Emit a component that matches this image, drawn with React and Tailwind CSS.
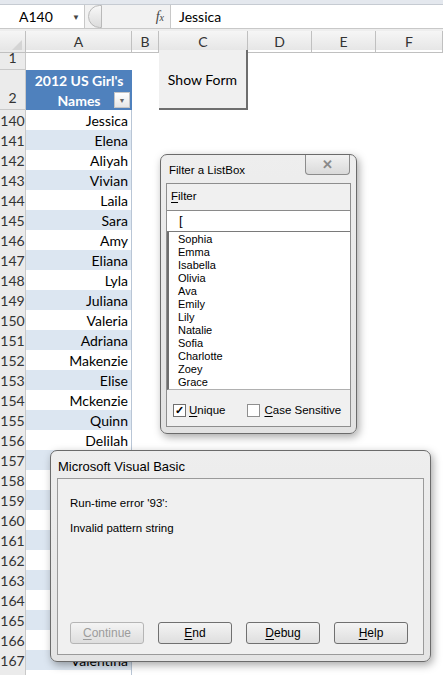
import React from "react";

const names = [
  "Jessica", "Elena", "Aliyah", "Vivian", "Laila", "Sara", "Amy", "Eliana", "Lyla", "Juliana",
  "Valeria", "Adriana", "Makenzie", "Elise", "Mckenzie", "Quinn", "Delilah", "Cora", "Kylie",
  "Rachel", "Daniela", "Kimberly", "Alexis", "Melody", "Kayla", "Jordyn", "Reagan", "Valentina", "",
];

const listItems = [
  "Sophia", "Emma", "Isabella", "Olivia", "Ava", "Emily", "Lily", "Natalie", "Sofia", "Charlotte", "Zoey", "Grace",
];

const cols = "grid grid-cols-[26px_106px_27px_89px_64px_64px_67px]";

function Mn({ k, rest }) {
  return (
    <span>
      <span className="underline underline-offset-2">{k}</span>
      {rest}
    </span>
  );
}

function VbButton({ children, disabled }) {
  return (
    <div
      className={
        "flex h-[22px] w-[74px] items-center justify-center rounded-[3px] border bg-gradient-to-b from-[#f4f4f4] to-[#dedede] text-[12px] " +
        (disabled ? "border-[#b5b5b5] text-[#9c9c9c]" : "border-[#707070] text-black")
      }
    >
      {children}
    </div>
  );
}

function Sheet() {
  return (
    <div className="font-['Lato',sans-serif] text-[14px] text-black">
      {/* ribbon edge + formula bar */}
      <div className="h-[5px] border-b border-[#c6cbd2] bg-[#e4e8ee]" />
      <div className="flex h-[23px] bg-[#f2f2f2]">
        <div className="flex w-[85px] items-center justify-between border-r border-[#c8c8c8] bg-white pl-[19px] pr-[4px]">
          <span>A140</span>
          <span className="text-[8px] text-[#444]">▼</span>
        </div>
        <div className="ml-[3px] h-[23px] w-[14px] rounded-l-full border border-[#b9b9b9] bg-gradient-to-b from-[#f8f8f8] to-[#dcdcdc]" />
        <div className="flex w-[68px] items-center justify-end pr-[6px] font-['Liberation_Serif',serif] text-[14px] italic text-[#444]">
          <span>f<span className="text-[10px]">x</span></span>
        </div>
        <div className="flex flex-1 items-center border-l border-[#c8c8c8] bg-white pl-[8px]">Jessica</div>
      </div>
      <div className="h-[3px] border-t border-[#c8c8c8] bg-[#eeeeee]" />

      {/* column headers */}
      <div className={cols + " h-[19px] bg-gradient-to-b from-[#f6f6f6] to-[#e6e6e6] text-[#333]"}>
        <div className="relative border-r border-b border-[#c0c0c0]">
          <div className="absolute bottom-[2px] right-[3px] h-0 w-0 border-l-[10px] border-b-[10px] border-l-transparent border-b-[#d4d4d4]" />
        </div>
        {["A", "B", "C", "D", "E", "F"].map((c) => (
          <div key={c} className="flex items-center justify-center border-r border-b border-[#c0c0c0]">
            {c}
          </div>
        ))}
      </div>

      {/* rows 1 and 2 */}
      <div className={cols + " grid-rows-[20px_40px]"}>
        <div className="flex items-end justify-center border-r border-b border-[#c9c9c9] bg-[#ebebeb] pb-[1px] text-[#333]">1</div>
        <div className="col-start-4 row-span-2 row-start-1 flex items-center justify-center border-r-2 border-b-2 border-[#6e6e6e] bg-[#f0f0f0] text-[14px]">
          Show Form
        </div>
        <div className="col-start-1 row-start-2 flex items-end justify-center border-r border-b border-[#c9c9c9] bg-[#ebebeb] pb-[1px] text-[#333]">2</div>
        <div className="relative col-start-2 row-start-2 flex flex-col items-center bg-[#4f81bd] pt-[1px] font-bold leading-[20px] text-white">
          <span>2012 US Girl's</span>
          <span>Names</span>
          <div className="absolute bottom-[2px] right-[2px] flex h-[16px] w-[16px] items-center justify-center border border-[#c5c5c5] bg-gradient-to-b from-white to-[#e6e6e6] text-[7px] text-[#666]">
            ▼
          </div>
        </div>
      </div>

      {/* data rows */}
      {names.map((n, i) => (
        <div key={i} className={cols + " h-[20px]"}>
          <div className="flex items-center justify-center border-r border-b border-[#c9c9c9] bg-[#ebebeb] text-[#333]">
            {n ? 140 + i : ""}
          </div>
          <div
            className={
              "flex items-center justify-end border-r border-b border-[#b9c6d6] pr-[3px] " +
              (i % 2 === 1 ? "bg-[#dce6f1]" : "bg-white")
            }
          >
            {n}
          </div>
        </div>
      ))}
    </div>
  );
}

function ListBoxForm() {
  return (
    <div className="absolute left-[160px] top-[154px] h-[280px] w-[197px] rounded-[7px] border border-[#6b6b6b] bg-gradient-to-b from-[#eeeeee] to-[#e2e2e2] font-['Liberation_Sans',sans-serif] shadow-[2px_3px_8px_rgba(0,0,0,0.35)]">
      <div className="absolute left-[8px] top-[7px] text-[11.5px] text-black">Filter a ListBox</div>
      <div className="absolute left-[144px] top-[0px] flex h-[20px] w-[45px] items-center justify-center rounded-b-[4px] border border-t-0 border-[#8c8c8c] bg-gradient-to-b from-[#f2f2f2] to-[#dadada] text-[13px] font-bold text-[#8a8a8a]">
        ✕
      </div>
      <div className="absolute left-[5px] top-[28px] flex h-[244px] w-[185px] flex-col border border-[#8e8e8e] bg-[#f0f0f0] text-[11.5px]">
        <div className="h-[26px] pl-[4px] pt-[5px] leading-[14px]">
          <Mn k="F" rest="ilter" />
        </div>
        <div className="flex h-[22px] items-center border-y border-[#7a7a7a] border-t-[#8a8a8a] bg-white pl-[12px] text-[13px]">
          [
        </div>
        <div className="h-[158px] border-l-2 border-b border-[#6e6e6e] border-b-[#b0b0b0] bg-white pl-[9px] pt-[1px] text-[11px] leading-[13px]">
          {listItems.map((s) => (
            <div key={s}>{s}</div>
          ))}
        </div>
        <div className="flex items-center pl-[6px] pt-[12px]">
          <div className="flex h-[13px] w-[13px] items-center justify-center border border-[#6f6f6f] bg-white text-[11px] font-bold leading-none">
            ✓
          </div>
          <span className="ml-[3px]">
            <Mn k="U" rest="nique" />
          </span>
          <div className="ml-[22px] h-[13px] w-[13px] border border-[#8f8f8f] bg-white" />
          <span className="ml-[4px]">
            <Mn k="C" rest="ase Sensitive" />
          </span>
        </div>
      </div>
    </div>
  );
}

function ErrorDialog() {
  return (
    <div className="absolute left-[50px] top-[450px] h-[212px] w-[381px] rounded-[7px] border border-[#6b6b6b] bg-gradient-to-b from-[#eeeeee] to-[#e4e4e4] font-['Liberation_Sans',sans-serif] shadow-[2px_3px_8px_rgba(0,0,0,0.35)]">
      <div className="absolute left-[7px] top-[6px] text-[13px] text-black">Microsoft Visual Basic</div>
      <div className="absolute left-[6px] top-[27px] flex h-[177px] w-[367px] flex-col border border-[#9a9a9a] bg-[#f0f0f0] text-[11.5px]">
        <div className="pl-[12px] pt-[17px] leading-[14px]">Run-time error '93':</div>
        <div className="pl-[12px] pt-[11px] leading-[14px]">Invalid pattern string</div>
        <div className="mt-auto mb-[10px] flex gap-[14px] pl-[12px]">
          <VbButton disabled>
            <Mn k="C" rest="ontinue" />
          </VbButton>
          <VbButton>
            <Mn k="E" rest="nd" />
          </VbButton>
          <VbButton>
            <Mn k="D" rest="ebug" />
          </VbButton>
          <VbButton>
            <Mn k="H" rest="elp" />
          </VbButton>
        </div>
      </div>
    </div>
  );
}

export default function App() {
  return (
    <div className="relative h-[675px] w-[443px] overflow-hidden bg-white">
      <Sheet />
      <ListBoxForm />
      <ErrorDialog />
    </div>
  );
}
